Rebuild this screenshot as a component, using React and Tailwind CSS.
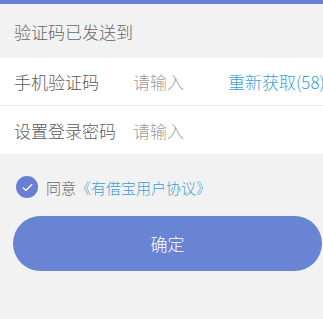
import React, { useState } from 'react';

const Row = ({ label, children, border }) => (
  <div className={`flex h-[48px] items-center pl-[14px] ${border ? 'border-b border-[#ececec]' : ''}`}>
    <span className="w-[119px] shrink-0 whitespace-nowrap text-[#5a5a5a]">{label}</span>
    {children}
  </div>
);

const App = () => {
  const [agreed, setAgreed] = useState(true);

  return (
    <div className="flex h-[319px] w-[323px] flex-col overflow-hidden bg-[#f2f2f2] text-[17px] font-light leading-none" style={{ fontFamily: '"Noto Sans CJK SC", "Noto Sans", sans-serif' }}>
      {/* Top bar */}
      <div className="h-[4px] bg-[#6b7ed6]" />

      {/* Hint */}
      <div className="flex h-[54px] items-center pl-[14px] text-[#666]">验证码已发送到</div>

      {/* Form */}
      <div className="bg-white">
        <Row label="手机验证码" border>
          <span className="w-[95px] shrink-0 text-[#9a9a9a]">请输入</span>
          <span className="whitespace-nowrap text-[#3d9fd6]">重新获取(58)</span>
        </Row>
        <Row label="设置登录密码">
          <span className="text-[#9a9a9a]">请输入</span>
        </Row>
      </div>

      {/* Agreement */}
      <div className="mt-[22px] flex items-center pl-[16px] text-[15px]">
        <button
          onClick={() => setAgreed(!agreed)}
          className={`flex h-[22px] w-[22px] items-center justify-center rounded-full ${agreed ? 'bg-[#6b7ed6]' : 'border border-[#ccc] bg-white'}`}
        >
          {agreed && (
            <svg width="13" height="13" viewBox="0 0 24 24" fill="none" stroke="white" strokeWidth="2.2" strokeLinecap="round" strokeLinejoin="round">
              <path d="M4 12.5l5 5L20 6.5" />
            </svg>
          )}
        </button>
        <span className="ml-[8px] text-[#666]">同意</span>
        <span className="text-[#3d9fd6]">《有借宝用户协议》</span>
      </div>

      {/* Confirm */}
      <div className="mt-[18px] pl-[13px] pr-[1px]">
        <button className="flex h-[55px] w-full items-center justify-center rounded-full bg-[#6a84d4] text-[17px] text-white">
          确定
        </button>
      </div>
    </div>
  );
};

export default App;
